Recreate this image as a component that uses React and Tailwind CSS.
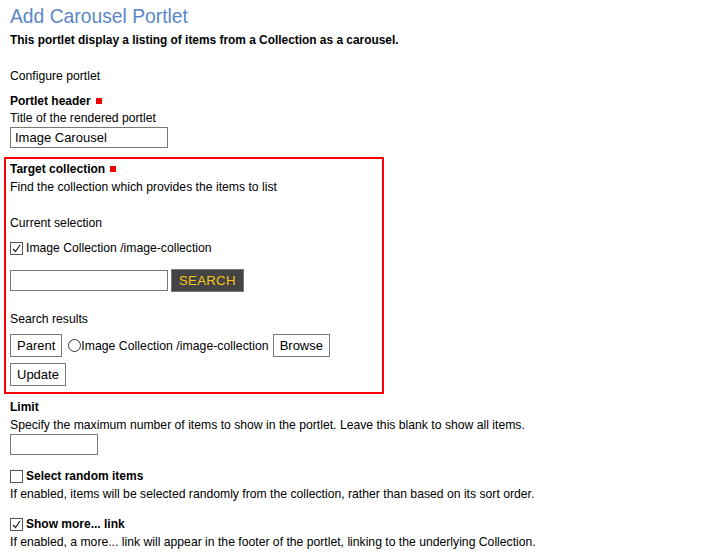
export default function App() {
  const req = <span className="inline-block w-[6px] h-[6px] bg-[#e00] ml-[5px] align-[1px]" />
  const box = 'border border-[#777] bg-white'
  const btn = 'border border-[#777] bg-white px-[6px] h-[23px] text-[13px] leading-[21px] text-black'
  const check = (
    <span className="w-[13px] h-[13px] border border-[#555] flex items-center justify-center">
      <svg width="9" height="9" viewBox="0 0 9 9"><path d="M1 5 L3.5 7.5 L8 1" fill="none" stroke="#222" strokeWidth="1.2" /></svg>
    </span>
  )

  return (
    <div className="w-[724px] h-[552px] bg-white text-black text-[12.2px] leading-[16px] overflow-hidden" style={{ fontFamily: '"Liberation Sans", Arial, sans-serif' }}>
      <div className="pl-[10px] pt-[5px]">
        <h1 className="text-[19.3px] leading-[24px] text-[#5b87c9] font-normal">Add Carousel Portlet</h1>
        <p className="font-bold text-[11.9px] mt-[3px]">This portlet display a listing of items from a Collection as a carousel.</p>
        <p className="mt-[20px]">Configure portlet</p>
        <p className="font-bold text-[12px] mt-[9px]">Portlet header{req}</p>
        <p className="mt-[1px]">Title of the rendered portlet</p>
        <div className={`${box} mt-[1px] w-[158px] h-[21px] px-[4px] text-[13px] leading-[19px]`}>Image Carousel</div>
      </div>

      <div className="ml-[4px] mt-[9px] w-[380px] border-2 border-[#f00] pl-[4px] pt-[2px] pb-[6px]">
        <p className="font-bold text-[12px]">Target collection{req}</p>
        <p className="mt-[2px]">Find the collection which provides the items to list</p>
        <p className="mt-[20px]">Current selection</p>
        <label className="mt-[9px] flex items-center gap-[3px] h-[16px]">
          {check}
          <span>Image Collection /image-collection</span>
        </label>
        <div className="mt-[13px] flex items-center gap-[3px]">
          <div className={`${box} w-[158px] h-[21px]`} />
          <button className="h-[23px] px-[7px] bg-[#444] border border-[#777] text-[#f5c518] text-[13.2px] leading-[21px] tracking-[0.3px]">SEARCH</button>
        </div>
        <p className="mt-[19px]">Search results</p>
        <div className="mt-[7px] flex items-center">
          <button className={`${btn} px-[5px]`}>Parent</button>
          <span className="ml-[6px] w-[13px] h-[13px] rounded-full border border-[#333]" />
          <span className="tracking-[0.05px]">Image Collection /image-collection</span>
          <button className={`${btn} ml-[4px]`}>Browse</button>
        </div>
        <div className="mt-[6px]">
          <button className={btn}>Update</button>
        </div>
      </div>

      <div className="pl-[10px]">
        <p className="font-bold text-[12px] mt-[5px]">Limit</p>
        <p className="mt-[2px]">Specify the maximum number of items to show in the portlet. Leave this blank to show all items.</p>
        <div className={`${box} mt-[1px] w-[88px] h-[21px]`} />
        <label className="mt-[13px] flex items-center gap-[3px] h-[16px] font-bold text-[12px]">
          <span className="w-[13px] h-[13px] border border-[#555]" />
          <span>Select random items</span>
        </label>
        <p className="mt-[2px]">If enabled, items will be selected randomly from the collection, rather than based on its sort order.</p>
        <label className="mt-[14px] flex items-center gap-[3px] h-[16px] font-bold text-[12px]">
          {check}
          <span>Show more... link</span>
        </label>
        <p className="mt-[2px]">If enabled, a more... link will appear in the footer of the portlet, linking to the underlying Collection.</p>
      </div>
    </div>
  )
}
